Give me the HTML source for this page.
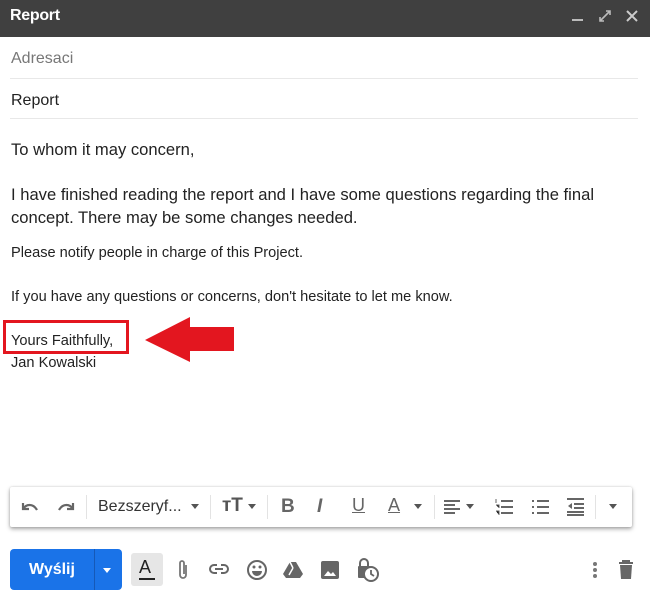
<!DOCTYPE html>
<html><head><meta charset="utf-8"><style>
*{margin:0;padding:0;box-sizing:border-box}
body{width:650px;height:595px;background:#fff;font-family:"Liberation Sans",Arial,sans-serif;position:relative;overflow:hidden;color:#222}
.abs{position:absolute;white-space:nowrap}
.hdr{position:absolute;left:0;top:0;width:650px;height:37px;background:#404040}
.line{position:absolute;left:10px;width:628px;height:1px;background:#e8e8e8}
.tb{position:absolute;left:10px;top:487px;width:622px;height:40px;background:#fff;box-shadow:0 2px 4px rgba(0,0,0,.35),0 0 2px rgba(0,0,0,.15);border-radius:2px}
.sep{position:absolute;top:8px;width:1px;height:24px;background:#e3e3e3}
svg{position:absolute}
</style></head><body>
<div class="hdr"></div>
<div class="abs" style="left:10px;top:7px;color:#fff;font-size:16px;font-weight:bold;letter-spacing:-0.3px">Report</div>
<div class="abs" style="left:572px;top:19px;width:11px;height:2px;background:#bbb"></div>
<svg style="left:598px;top:9px" width="14" height="14" viewBox="0 0 14 14"><path d="M2 12L12 2M8 2h4v4M2 8v4h4" stroke="#bbb" stroke-width="1.6" fill="none"/></svg>
<svg style="left:626px;top:10px" width="12" height="12" viewBox="0 0 12 12"><path d="M1 1L11 11M11 1L1 11" stroke="#ccc" stroke-width="2"/></svg>
<div class="abs" style="left:11px;top:50px;font-size:16px;color:#777">Adresaci</div>
<div class="line" style="top:78px"></div>
<div class="abs" style="left:11px;top:92px;font-size:16px;color:#222">Report</div>
<div class="line" style="top:118px"></div>
<div class="abs" style="left:11px;top:140px;font-size:16.6px">To whom it may concern,</div>
<div class="abs" style="left:11px;top:185px;font-size:16.6px">I have finished reading the report and I have some questions regarding the final</div>
<div class="abs" style="left:11px;top:208px;font-size:16.6px">concept. There may be some changes needed.</div>
<div class="abs" style="left:11px;top:245px;font-size:14.6px">Please notify people in charge of this Project.</div>
<div class="abs" style="left:11px;top:289px;font-size:14.6px">If you have any questions or concerns, don't hesitate to let me know.</div>
<div class="abs" style="left:11px;top:333px;font-size:14.6px">Yours Faithfully,</div>
<div class="abs" style="left:11px;top:355px;font-size:14.6px">Jan Kowalski</div>
<div class="abs" style="left:3px;top:320px;width:126px;height:34px;border:3px solid #e3161f"></div>
<svg style="left:140px;top:312px" width="100" height="52" viewBox="0 0 100 52"><path d="M5 28L50 5V15H94V39H50V50Z" fill="#e3161f"/></svg>
<div class="tb">
 <svg style="left:10px;top:12px" width="20" height="16" viewBox="0 0 20 16"><path d="M3 4v6h6M3 10C6 5 13 4 17 11" stroke="#666" stroke-width="2.2" fill="none"/></svg>
 <svg style="left:46px;top:12px" width="20" height="16" viewBox="0 0 20 16"><path d="M17 4v6h-6M17 10C14 5 7 4 3 11" stroke="#666" stroke-width="2.2" fill="none"/></svg>
 <div class="sep" style="left:76px"></div>
 <div class="abs" style="left:88px;top:11px;font-size:16px;color:#333">Bezszeryf...</div>
 <div class="abs" style="left:181px;top:17px;border:4px solid transparent;border-top:5px solid #555"></div>
 <div class="sep" style="left:200px"></div>
 <div class="abs" style="left:212px;top:8px;font-size:19px;font-weight:bold;color:#555">тT</div>
 <div class="abs" style="left:238px;top:17px;border:4px solid transparent;border-top:5px solid #555"></div>
 <div class="sep" style="left:257px"></div>
 <div class="abs" style="left:271px;top:9px;font-size:19px;font-weight:bold;color:#666">B</div>
 <div class="abs" style="left:307px;top:9px;font-size:19px;font-weight:bold;font-style:italic;color:#666">I</div>
 <div class="abs" style="left:342px;top:8px;font-size:18px;color:#666;text-decoration:underline">U</div>
 <div class="abs" style="left:378px;top:8px;font-size:18px;color:#666;text-decoration:underline">A</div>
 <div class="abs" style="left:404px;top:17px;border:4px solid transparent;border-top:5px solid #555"></div>
 <div class="sep" style="left:424px"></div>
 <svg style="left:433px;top:12px" width="18" height="16" viewBox="0 0 18 16"><path d="M1 2h16M1 6h11M1 10h16M1 14h11" stroke="#666" stroke-width="2"/></svg>
 <div class="abs" style="left:456px;top:17px;border:4px solid transparent;border-top:5px solid #555"></div>
 <svg style="left:485px;top:11px" width="18" height="18" viewBox="0 0 18 18"><path d="M6 3h12M6 9h12M6 15h12" stroke="#666" stroke-width="2"/><path d="M1 1v4M1 7h3v3M1 13h3v4" stroke="#666" stroke-width="1"/></svg>
 <svg style="left:521px;top:11px" width="18" height="18" viewBox="0 0 18 18"><path d="M6 3h12M6 9h12M6 15h12M1 3h2M1 9h2M1 15h2" stroke="#666" stroke-width="2"/></svg>
 <svg style="left:556px;top:11px" width="18" height="18" viewBox="0 0 18 18"><path d="M1 1h17M8 6h10M8 10h10M1 17h17M1 14h17" stroke="#666" stroke-width="2"/><path d="M6 5v6L2 8z" fill="#666"/></svg>
 <div class="sep" style="left:585px"></div>
 <div class="abs" style="left:599px;top:17px;border:4px solid transparent;border-top:5px solid #555"></div>
</div>
<div class="abs" style="left:10px;top:549px;width:112px;height:41px;background:#1a73e8;border-radius:4px"></div>
<div class="abs" style="left:94px;top:549px;width:1px;height:41px;background:#1559b8"></div>
<div class="abs" style="left:29px;top:561px;color:#fff;font-size:16px;font-weight:bold">Wyślij</div>
<div class="abs" style="left:103px;top:568px;border:4px solid transparent;border-top:5px solid #fff"></div>
<div class="abs" style="left:131px;top:553px;width:32px;height:33px;background:#e6e6e6;border-radius:3px"></div>
<div class="abs" style="left:139px;top:557px;font-size:18px;color:#222">A</div>
<div class="abs" style="left:139px;top:578px;width:16px;height:2px;background:#222"></div>
<svg style="left:176px;top:559px" width="14" height="22" viewBox="0 0 14 22"><path d="M10 6v10a3 3 0 0 1-6 0V4a2 2 0 0 1 4 0v11" stroke="#777" stroke-width="1.8" fill="none"/></svg>
<svg style="left:208px;top:562px" width="22" height="14" viewBox="0 0 22 14"><path d="M9 3H6a4 4 0 0 0 0 8h3M13 3h3a4 4 0 0 1 0 8h-3M7 7h8" stroke="#666" stroke-width="2" fill="none"/></svg>
<svg style="left:246px;top:559px" width="22" height="22" viewBox="0 0 22 22"><circle cx="11" cy="11" r="9" stroke="#666" stroke-width="2" fill="none"/><circle cx="8" cy="8" r="1.5" fill="#666"/><circle cx="14" cy="8" r="1.5" fill="#666"/><path d="M6 12h10a5 5 0 0 1-10 0z" fill="#666"/></svg>
<svg style="left:283px;top:561px" width="20" height="18" viewBox="0 0 20 18"><path d="M7 1h6l7 12-3 4H3l-3-4z" fill="#666"/><path d="M7 1l3 6M10 7l-4 7" stroke="#fff" stroke-width="1.5"/></svg>
<svg style="left:320px;top:560px" width="20" height="20" viewBox="0 0 20 20"><rect x="1" y="1" width="18" height="18" rx="2" fill="#666"/><path d="M4 16l4-5 3 3 2-2 3 4z" fill="#fff"/></svg>
<svg style="left:357px;top:558px" width="22" height="24" viewBox="0 0 22 24"><path d="M3 8V5a4 4 0 0 1 8 0v3" stroke="#666" stroke-width="2" fill="none"/><rect x="1" y="8" width="12" height="12" rx="1" fill="#666"/><circle cx="14" cy="16" r="7" fill="#fff" stroke="#666" stroke-width="2"/><path d="M14 12v4l3 2" stroke="#666" stroke-width="1.8" fill="none"/></svg>
<svg style="left:592px;top:561px" width="6" height="18" viewBox="0 0 6 18"><circle cx="3" cy="3" r="2" fill="#777"/><circle cx="3" cy="9" r="2" fill="#777"/><circle cx="3" cy="15" r="2" fill="#777"/></svg>
<svg style="left:618px;top:560px" width="16" height="20" viewBox="0 0 16 20"><path d="M1 3h14M5 3V1h6v2" stroke="#666" stroke-width="2" fill="none"/><path d="M2 5h12l-1 14H3z" fill="#666"/></svg>
</body></html>
